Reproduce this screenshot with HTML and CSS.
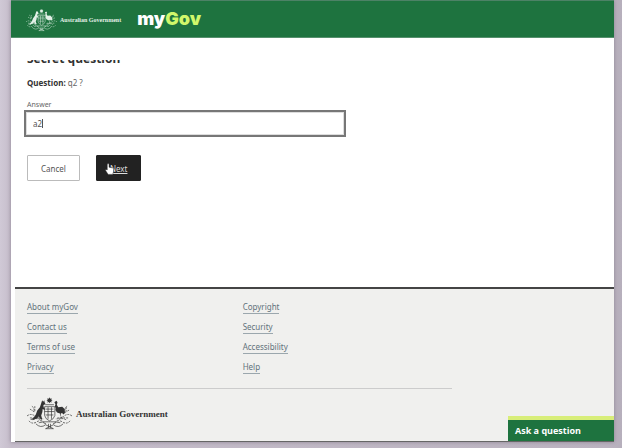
FILE: index.html
```html
<!DOCTYPE html>
<html lang="en">
<head>
    <meta charset="UTF-8">
    <meta name="viewport" content="width=device-width, initial-scale=1">
    <title>Secret question - myGov</title>
    <link rel="stylesheet" href="styles.css">
</head>

<body>
    <svg class="sprite" aria-hidden="true">
        <symbol id="crest" viewBox="0 0 46 34">
            <!-- star and shield -->
            <path fill="currentColor" d="M23 0l.7 1.300 1.600-.5-.6 1.500 1.300.7-1.300.8.6 1.500-1.600-.5L23 6l-.7-1.200-1.600.5.6-1.500-1.300-.8 1.300-.7-.6-1.500 1.600.5z"/>
            <path fill="none" stroke="currentColor" stroke-width=".7" d="M18.500 7.500h9M18 9.500h10.500v9q-1 4-5.500 5.500q-4-1.500-5-5.500zM18 14.500h10M21.500 10v12M25 10v12M19 18h8M19 12h8"/>
            <!-- kangaroo -->
            <path fill="currentColor" d="M15.500 3l1 1.500L17.700 3l.3 2 .8 1.500-1 1-1 .3.200 2.200 1.500 2-.5 1-2-1-.3 3-1.200 3.500 1 3.500-1 1-2.500-3.500-2 2-3.500 1.500-3.500-.3 3.500-1.700 2.500-3.500 1.500-4 2.700-3.500z"/>
            <!-- emu -->
            <path fill="currentColor" d="M28 5l2-1.500 1.200 1.500-.7 2.500 1.500 2.500 4-.5 2.500 2.500.3 4-1.500 1.500-1.500-1.500-1.300.6.5 3.400 1.500 1.500-1.500-.3-1.300-4.700-3-1-1.700-2.500.3-2-.8-2 .6-2z"/>
            <!-- wattle and scroll -->
            <g fill="none" stroke="currentColor" stroke-width=".7">
                <path stroke-dasharray="2 1" d="M5 9q3 2 2 6M3 12l5 3M8 9v5M41 9q-3 2-2 6M43 13l-5 3M40 10v4M0 19q4-3 8 0t9 3M46 19q-4-3-8 0t-9 3M2 24q3 4 8 1t9 2M44 24q-3 4-8 1t-9 2M6 23q5-3 9 1M40 23q-5-3-9 1M3 21h12M31 21h12"/>
                <path d="M9 27q5 5 10 1l8 4M37 27q-5 5-10 1l-8 4M17 25h12M19 32h8M12 26q4-2 7 1M34 26q-4-2-7 1M22 27v4M24 27v4"/>
            </g>
        </symbol>
    </svg>

    <div class="page">
        <header class="header">
            <div class="header-gov">
                <svg class="crest-small" aria-hidden="true"><use href="#crest"/></svg>
                <span>Australian Government</span>
            </div>
            <div class="logo">my<span>Gov</span></div>
        </header>

        <main class="content">
            <div class="title-clip">
                <h1>Secret question</h1>
            </div>
            <form>
                <p class="question"><strong>Question:</strong> q2 ?</p>
                <label for="answer">Answer</label>
                <div class="answer-box">
                    <input type="text" id="answer" value="a2">
                    <span class="caret"></span>
                </div>
                <div class="actions">
                    <button type="button" class="btn btn-cancel">Cancel</button>
                    <button type="submit" class="btn btn-next">Next
                        <svg class="pointer" viewBox="0 0 10 13" aria-hidden="true">
                            <path fill="#fff" stroke="#222" stroke-width=".5" d="M2.500 1q1-1 2 0v3.500l4 .8q1 .2 1 1.200v3L8.500 12.500h-5L.5 8q0-1.500 2-.5z"/>
                        </svg>
                    </button>
                </div>
            </form>
        </main>

        <footer class="footer">
            <div class="footer-inner">
                <nav class="footer-links" aria-label="Footer">
                    <ul>
                        <li><a href="#">About myGov</a></li>
                        <li><a href="#">Contact us</a></li>
                        <li><a href="#">Terms of use</a></li>
                        <li><a href="#">Privacy</a></li>
                    </ul>
                    <ul>
                        <li><a href="#">Copyright</a></li>
                        <li><a href="#">Security</a></li>
                        <li><a href="#">Accessibility</a></li>
                        <li><a href="#">Help</a></li>
                    </ul>
                </nav>
                <div class="footer-gov">
                    <svg class="crest-large" aria-hidden="true"><use href="#crest"/></svg>
                    <span>Australian Government</span>
                </div>
            </div>
            <button type="button" class="ask">Ask a question</button>
        </footer>
    </div>
</body>
</html>
```

FILE: styles.css
```css
* {
    box-sizing: border-box;
    margin: 0;
    padding: 0;
}

body {
    min-height: 100vh;
    padding: 0 8px 6px 11px;
    display: flex;
    background: linear-gradient(90deg, #d0c9d6, #c6bdcb 11px, #bbb3c0 98%, #b6afbc);
    font-family: "Noto Sans", sans-serif;
    font-size: 8px;
    color: #666;
}

button,
input {
    font-family: inherit;
    font-size: inherit;
}

.sprite {
    position: absolute;
    width: 0;
    height: 0;
}

.page {
    flex: 1;
    display: flex;
    flex-direction: column;
    background: #fff;
    box-shadow: 0 0 4px #8d8594;
}

.header {
    display: flex;
    align-items: center;
    gap: 16px;
    height: 38px;
    padding: 0 15px;
    background: #1e733f;
    border-top: 1px solid #4d8266;
    border-bottom: 1px solid #56906d;
    color: #fff;
}

.header-gov,
.footer-gov {
    display: flex;
    align-items: center;
    font-family: "Liberation Serif", serif;
    font-weight: bold;
}

.header-gov {
    gap: 3px;
    padding-top: 2px;
    font-size: 6px;
    color: #e3f0e7;
}

.crest-small {
    width: 31px;
    height: 23px;
}

.logo {
    font-family: Inter, sans-serif;
    font-size: 18px;
    font-weight: 900;
    line-height: 24px;
}

.logo span {
    color: #d0f76b;
}

.content {
    flex: 1;
    padding: 22px 16px;
}

.title-clip {
    display: flex;
    align-items: flex-end;
    height: 6px;
    overflow: hidden;
}

h1 {
    font-size: 12px;
    line-height: 14px;
    color: #333;
}

.question {
    margin-top: 10px;
    line-height: 14px;
}

.question strong {
    color: #333;
}

label {
    display: block;
    margin-top: 10px;
    font-size: 7px;
    line-height: 10px;
}

.answer-box {
    position: relative;
    width: 57%;
    max-width: 322px;
    margin: 0 0 18px -3px;
    border: 2px solid #777;
}

.answer-box input {
    display: block;
    width: 100%;
    height: 23px;
    padding: 0 6px;
    border: 1px solid #ddd;
    outline: none;
    color: #555;
}

.caret {
    position: absolute;
    left: 16px;
    top: 7px;
    width: 1px;
    height: 9px;
    background: #555;
}

.actions {
    display: flex;
    gap: 16px;
}

.btn {
    position: relative;
    height: 26px;
    padding: 0 13px;
    border: 1px solid #bbb;
    border-radius: 1px;
    background: #fff;
    color: #555;
}

.btn-next {
    background: #222;
    border-color: #222;
    color: #ddd;
    text-decoration: underline;
}

.pointer {
    position: absolute;
    left: 8px;
    top: 7px;
    width: 9px;
    height: 12px;
}

.footer {
    display: flex;
    align-items: flex-end;
    justify-content: space-between;
    margin-left: 4px;
    background: #f0f0ee;
    border-top: 2px solid #444;
    border-bottom: 1px solid #666;
}

.footer-inner {
    width: 73%;
    padding: 11px 0 10px 12px;
}

.footer-links {
    display: grid;
    grid-template-columns: 1fr 1fr;
    column-gap: 6px;
    padding-bottom: 8px;
    border-bottom: 1px solid #ccc;
}

.footer-links ul {
    list-style: none;
}

.footer-links li {
    display: flex;
    height: 20px;
}

.footer-links a {
    height: 14px;
    line-height: 14px;
    border-bottom: 1px solid #9ba7ad;
    color: #62727b;
    text-decoration: none;
}

.footer-gov {
    gap: 4px;
    margin-top: 8px;
    font-size: 9px;
    color: #333;
}

.crest-large {
    width: 45px;
    height: 34px;
}

.ask {
    width: 106px;
    height: 25px;
    padding: 0 7px;
    border: none;
    border-top: 4px solid #d8ee79;
    background: #1e733f;
    color: #fff;
    font-family: "Open Sans", sans-serif;
    font-size: 9px;
    font-weight: bold;
    text-align: left;
}
```
